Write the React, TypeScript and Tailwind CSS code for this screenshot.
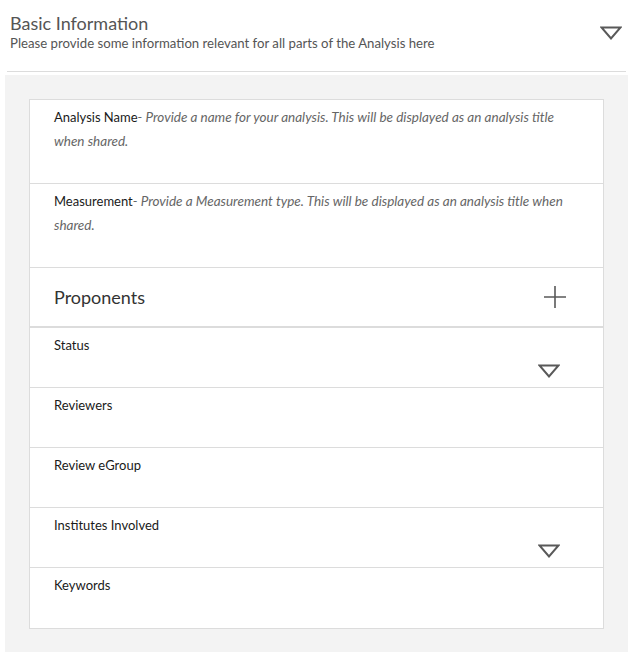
const font = { fontFamily: "Lato, 'Open Sans', sans-serif" };

function Caret({ className = "" }: { className?: string }) {
  return (
    <svg width="22" height="14" viewBox="0 0 22 14" className={className}>
      <path d="M1.5 1.5 H20.5 L11 12.5 Z" fill="none" stroke="#595959" strokeWidth="2" strokeLinejoin="miter" />
    </svg>
  );
}

function TextRow({ label, hint }: { label: string; hint: string }) {
  return (
    <div className="h-[84px] border-b border-[#dcdcdc] px-[24px] pt-[5px]">
      <p className="text-[13px] leading-[24px] text-[#1a1a1a]">
        {label}
        <span className="text-[13.5px] italic text-[#666]">- {hint}</span>
      </p>
    </div>
  );
}

function FieldRow({ label, select, last }: { label: string; select?: boolean; last?: boolean }) {
  return (
    <div className={`relative h-[60px] px-[24px] pt-[5px] ${last ? "" : "border-b border-[#dcdcdc]"}`}>
      <p className="text-[13px] leading-[24px] text-[#1a1a1a]">{label}</p>
      {select ? <Caret className="absolute right-[43px] top-[36px]" /> : null}
    </div>
  );
}

export default function App() {
  return (
    <div style={font} className="w-[633px] bg-white">
      <div className="flex items-start justify-between px-[10px] pt-[12px] pb-[19px]">
        <div>
          <h2 className="text-[18px] leading-[22px] text-[#555]">Basic Information</h2>
          <p className="text-[13.2px] leading-[18px] text-[#555]">
            Please provide some information relevant for all parts of the Analysis here
          </p>
        </div>
        <Caret className="mt-[14px] mr-[1px]" />
      </div>
      <div className="mx-[7px] h-px bg-[#dcdcdc]" />
      <div className="mx-[5px] mt-[3px] bg-[#f3f3f3] px-[24px] pt-[24px] pb-[23px]">
        <div className="border border-[#dcdcdc] bg-white">
          <TextRow
            label="Analysis Name"
            hint="Provide a name for your analysis. This will be displayed as an analysis title when shared."
          />
          <TextRow
            label="Measurement"
            hint="Provide a Measurement type. This will be displayed as an analysis title when shared."
          />
          <div className="flex h-[60px] items-center justify-between border-b-2 border-[#dcdcdc] pl-[24px] pr-[37px]">
            <span className="text-[18px] text-[#333]">Proponents</span>
            <svg width="22" height="22" viewBox="0 0 22 22">
              <path d="M11 0 V22 M0 11 H22" stroke="#595959" strokeWidth="1.6" />
            </svg>
          </div>
          <FieldRow label="Status" select />
          <FieldRow label="Reviewers" />
          <FieldRow label="Review eGroup" />
          <FieldRow label="Institutes Involved" select />
          <FieldRow label="Keywords" last />
        </div>
      </div>
    </div>
  );
}
